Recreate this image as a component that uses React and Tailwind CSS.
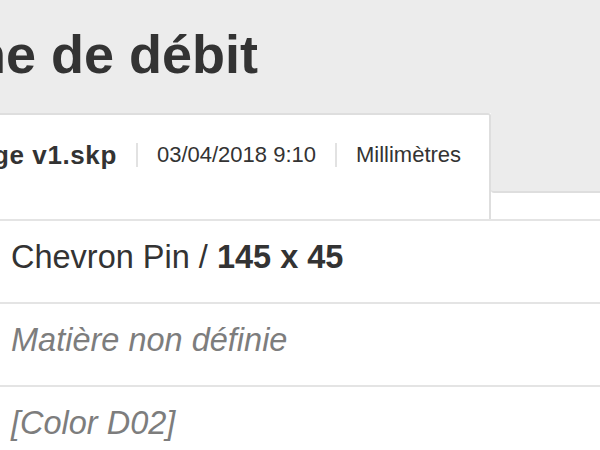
import React from 'react';

const rows = [
  { key: 'piece', content: (<>Chevron Pin / <span className="font-bold">145 x 45</span></>), muted: false },
  { key: 'matiere', content: 'Matière non définie', muted: true },
  { key: 'color', content: '[Color D02]', muted: true },
];

export default function App() {
  return (
    <div className="w-[600px] h-[450px] overflow-hidden bg-white font-['Liberation_Sans',Arial,sans-serif] text-[#333]">
      <div className="h-[113px] bg-[#ececec] pt-[27px] overflow-hidden">
        <h1 className="-ml-[27px] text-[54px] font-bold leading-none whitespace-nowrap">ne de débit</h1>
      </div>

      <div className="flex items-start bg-white">
        <div className="w-[491px] h-[106px] bg-white border-t-2 border-r-2 border-[#dedede] rounded-tr-[3px] pt-[27px] overflow-hidden">
          <div className="flex items-center text-[22px] leading-none whitespace-nowrap">
            <span className="-ml-[7px] text-[26px] font-bold tracking-[0.6px]">ge v1.skp</span>
            <span className="mx-[19px] h-[24px] w-[2px] bg-[#e2e2e2]" />
            <span>03/04/2018 9:10</span>
            <span className="mx-[19px] h-[24px] w-[2px] bg-[#e2e2e2]" />
            <span>Millimètres</span>
          </div>
        </div>
        <div className="flex-1 h-[80px] bg-[#ececec] border-b-2 border-[#dedede] rounded-bl-[3px]" />
      </div>

      <div className="border-t-2 border-[#e4e4e4]">
        {rows.map((row) => (
          <div
            key={row.key}
            className={`h-[83px] border-b-2 border-[#e4e4e4] pt-[20px] pl-[11px] text-[32.5px] leading-none whitespace-nowrap ${row.muted ? 'italic text-[#7d7d7d]' : ''}`}
          >
            {row.content}
          </div>
        ))}
      </div>
    </div>
  );
}
